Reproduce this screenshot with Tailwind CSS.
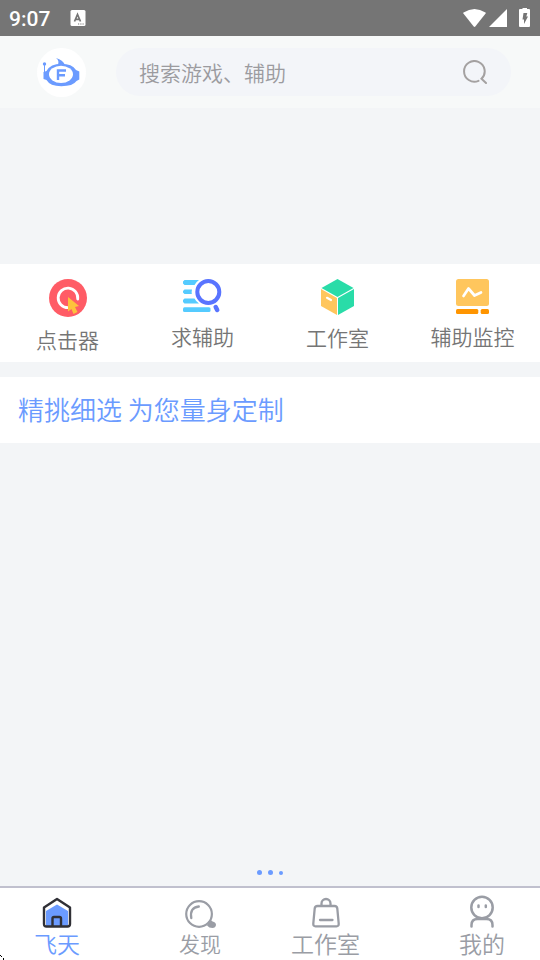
<!DOCTYPE html>
<html lang="zh-CN">
<head>
<meta charset="utf-8">
<meta name="viewport" content="width=device-width, initial-scale=1">
<title>飞天</title>
<script src="https://cdn.jsdelivr.net/npm/@tailwindcss/browser@4"></script>
</head>
<body class="flex min-h-screen flex-col bg-[#f3f5f7] font-['Noto_Sans_CJK_SC',sans-serif] font-[350] text-[#757575]">
  <!-- Status bar -->
  <div class="flex h-9 shrink-0 items-center bg-[#757575] px-[9px] text-white">
    <span class="pt-[2px] font-[Roboto,sans-serif] text-[21px] font-medium leading-8">9:07</span>
    <svg class="ml-5 h-4 w-4" viewBox="0 0 16 16" role="img" aria-label="输入法"><rect width="15" height="16" x="0.5" rx="1.5" fill="#fff"/><path d="M4.500 11.500L7.500 4.500L10.500 11.500M5.500 9.300H9.500" fill="none" stroke="#757575" stroke-width="1.7"/><path d="M8 14h1.200M10.300 14h1.200M12.500 14h1.200" stroke="#757575" stroke-width="1.200"/></svg>
    <svg class="ml-auto h-[19px] w-[23px]" viewBox="0 0 23 19" fill="#fff" role="img" aria-label="无线网络"><path d="M0.500 3.500Q11.500-3.500 22.500 3.500Q23 4 22.600 4.600L12.300 17.500Q11.500 18.300 10.700 17.500L0.400 4.600Q0 4 0.500 3.500Z"/></svg>
    <svg class="ml-[3px] h-[19px] w-[19px]" viewBox="0 0 19 19" fill="#fff" role="img" aria-label="信号"><path d="M18 0V18H0Z"/></svg>
    <svg class="ml-[11px] mr-px h-5 w-[11px]" viewBox="0 0 11 20" role="img" aria-label="充电中"><path d="M3.500 1V0H8V1H10Q11 1 11 2V18Q11 19 10 19H1Q0 19 0 18V2Q0 1 1 1Z" fill="#fff"/><path d="M4.500 5H8.300L7.300 8.500H9L5 16V11.500H3.500Z" fill="#757575"/></svg>
  </div>

  <!-- Header -->
  <header class="flex h-[72px] shrink-0 items-center bg-[#f7f9f9] pl-[37px] pr-[29px]">
    <a href="#" aria-label="飞天" class="flex size-[49px] shrink-0 items-center justify-center rounded-full bg-white">
      <svg class="size-[49px]" viewBox="0 0 49 49" fill="#6b9bff"><path d="M19 10Q26 12 28 17L20.500 17.500Q23 13 19 10Z"/><path d="M9.500 23Q13.500 15.800 24.300 15.800Q35 15.800 39 22L42.300 23.500V31.500L39.500 33Q36 38.200 24.300 38.200Q13 38.200 9.500 32L6.500 31V24Z"/><path d="M7 16h1v10h-1z"/><circle cx="7.500" cy="16" r="1.700"/><ellipse cx="24" cy="26.300" rx="12" ry="8.600" fill="#fff"/><path d="M21 32V22.500H29M21 27.300H28" fill="none" stroke="#6b9bff" stroke-width="2.400"/></svg>
    </a>
    <form class="ml-[30px] flex h-12 min-w-0 flex-1 items-center rounded-full bg-[#f3f5f9] pl-[23px] pr-6">
      <input type="search" aria-label="搜索" placeholder="搜索游戏、辅助" class="h-12 min-w-0 flex-1 bg-transparent text-[21px] outline-none placeholder:text-[#9b9b9f]">
      <button type="submit" aria-label="搜索"><svg class="size-6" viewBox="0 0 24 24" fill="none" stroke="#a4a1a1" stroke-width="2" stroke-linecap="round"><path d="M15.500 20.800A10.300 10.300 0 1 1 18.500 18.800L23 23"/></svg></button>
    </form>
  </header>

  <main class="flex flex-1 flex-col pt-[156px]">
    <nav aria-label="功能" class="grid h-[98px] grid-cols-4 bg-white pt-[15px] text-[21px] leading-[30px]">
      <a href="#" class="flex flex-col items-center gap-[7px]">
        <svg class="size-[38px]" viewBox="0 0 38 38"><circle cx="19" cy="19" r="19" fill="#ff5c66"/><path d="M19 28.700A9.800 9.800 0 1 1 28.700 20" fill="none" stroke="#fff" stroke-width="2.800" stroke-linecap="round"/><path d="M19 18L30 27L26 28L28.500 33L24.500 35L22.500 30L19 32.500Z" fill="#fdc23c"/></svg>
        <span>点击器</span>
      </a>
      <a href="#" class="flex flex-col items-center gap-[7px]">
        <svg class="h-[35px] w-[39px]" viewBox="0 0 39 35"><g fill="#55cbff"><path d="M1.500 1H16Q13 3 11.500 6H1.500L0 4.500V2.500ZM1.500 10.500H9Q8.400 13 8.800 15H1.500L0 13.500V12ZM1.500 19.500H11.500Q13 22.500 16 24.500H1.500L0 23V21Z"/><rect y="28.300" width="27.500" height="4.700" rx="1.500"/></g><circle cx="25.300" cy="13" r="11" fill="none" stroke="#5974ff" stroke-width="4"/><path d="M32.700 28L34.200 31" stroke="#5974ff" stroke-width="4.500" stroke-linecap="round"/></svg>
        <span>求辅助</span>
      </a>
      <a href="#" class="flex flex-col items-center gap-[7px]">
        <svg class="h-9 w-[33px]" viewBox="0 0 33 36"><path d="M16.500 0L32.500 9L16.500 18L0.500 9Z" fill="#29dca8"/><path d="M17 19L33 10V27L17 36Z" fill="#29dca8"/><path d="M0 10L16 19V36L0 27Z" fill="#ffc65d"/><path d="M6 18.800L10 21" stroke="#fff" stroke-width="2.200" stroke-linecap="round"/></svg>
        <span>工作室</span>
      </a>
      <a href="#" class="flex flex-col items-center gap-[7px]">
        <svg class="h-[35px] w-[33px]" viewBox="0 0 33 35"><rect width="33" height="27" rx="2.500" fill="#ffc65d"/><path d="M7.500 17L12.500 9.500L18.500 16.500L25 13.500" fill="none" stroke="#fff" stroke-width="2.700" stroke-linecap="round" stroke-linejoin="round"/><rect y="30" width="22.300" height="5" rx="1.500" fill="#ff9500"/><rect x="24.700" y="30" width="8.300" height="5" rx="1.500" fill="#ff9500"/></svg>
        <span>辅助监控</span>
      </a>
    </nav>
    <h1 class="mt-[15px] h-[66px] bg-white px-[18px] text-[26px] font-[350] leading-[64px] text-[#6b9bff]">精挑细选 为您量身定制</h1>
    <div role="status" aria-label="加载中" class="mt-auto flex items-center justify-center gap-[6px] pb-[11px]">
      <span class="size-[5px] rounded-full bg-[#6b9bff]"></span>
      <span class="size-[5px] rounded-full bg-[#6b9bff]"></span>
      <span class="size-1 rounded-full bg-[#6b9bff]"></span>
    </div>
  </main>

  <!-- Tab bar -->
  <nav aria-label="主导航" class="relative flex h-[74px] shrink-0 items-end justify-between border-t-2 border-[#c0c0ce] bg-white pl-[34px] pr-[35px] pb-[2px] text-[23px] leading-[30px] text-[#9a9da5]">
    <a href="#" aria-current="page" class="flex flex-col items-center text-[#6b9bff]">
      <svg class="h-[31px] w-[30px]" viewBox="0 0 30 31"><path d="M4 14L15 7.500L26 14V29H4Z" fill="#6b9bff"/><path d="M2 10.500L15 2L28 10.500V27Q28 29.500 25.500 29.500H4.500Q2 29.500 2 27Z" fill="none" stroke="#303036" stroke-width="2.400" stroke-linejoin="round"/><path d="M10.500 29.500V21.500Q10.500 20 12 20H17.500Q19 20 19 21.500V29.500" fill="none" stroke="#303036" stroke-width="2.400"/></svg>
      <span>飞天</span>
    </a>
    <div class="flex items-end gap-[70px]">
      <a href="#" class="flex flex-col items-center text-[21px]">
        <svg class="h-7 w-8" viewBox="0 0 32 28" fill="none" stroke="#9a9da5"><circle cx="15" cy="14" r="13.500" stroke-width="2.300" class="origin-center scale-95"/><path d="M7.300 18Q5.500 7.500 14.800 6.500" stroke-width="2.300" stroke-linecap="round"/><path d="M26.500 20.500Q28 20 28.500 21.500Q32 22 32 25Q31.500 28 28.500 28Q25 28 23 25.500Z" fill="#9a9da5" stroke="none"/></svg>
        <span>发现</span>
      </a>
      <a href="#" class="flex flex-col items-center">
        <svg class="h-[31px] w-7" viewBox="0 0 28 31" fill="none" stroke="#9a9da5" stroke-width="2.300" stroke-linecap="round"><path d="M5.500 9H22.500Q25 9 25.300 11.500L26.700 26.500Q26.900 29.300 24.500 29.300H3.500Q1.100 29.300 1.300 26.500L2.700 11.500Q3 9 5.500 9ZM9.500 9V6.500A4.500 4.500 0 0 1 18.500 6.500V9M8 23H20.500"/></svg>
        <span>工作室</span>
      </a>
    </div>
    <a href="#" class="flex flex-col items-center">
      <svg class="h-[33px] w-7" viewBox="0 0 28 33" fill="none" stroke="#9a9da5" stroke-width="2.500" stroke-linecap="round"><circle cx="14" cy="12.500" r="10.700"/><path d="M10.500 10.500v1.500M17.800 10.500v1.500M3.500 31.500V30Q3.500 24 9.500 24H18.500Q24.500 24 24.500 30V31.500"/></svg>
      <span>我的</span>
    </a>
  </nav>

  <!-- Pointer tip at the window's corner -->
  <svg class="fixed bottom-0 left-0 h-[5px] w-1" viewBox="0 0 4 5" aria-hidden="true"><path d="M0 0h1v1h-1zM1 1h1v1h-1zM3 3h1v2h-1z" fill="#000"/></svg>
</body>
</html>
